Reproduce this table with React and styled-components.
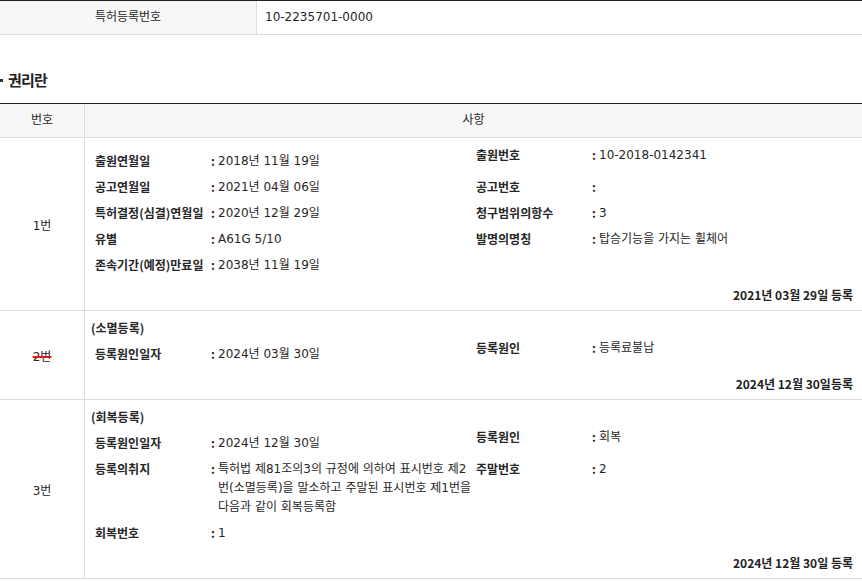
import React from "react";
import styled, { createGlobalStyle, css } from "styled-components";

const textFont = `"DejaVu Sans", "Noto Sans CJK KR", sans-serif`;
const boldFont = `"Noto Sans CJK KR", "Noto Sans", sans-serif`;

const GlobalStyle = createGlobalStyle`
  body {
    margin: 0;
    background: #fff;
    font-family: ${textFont};
    font-size: 12px;
    color: #262626;
  }
`;

const Page = styled.div`
  width: 862px;
`;

const InfoTable = styled.div`
  display: grid;
  grid-template-columns: 257px 1fr;
  border-top: 1px solid #222;
  border-bottom: 1px solid #ddd;
`;

const InfoLabel = styled.div`
  background: #f7f7f7;
  border-right: 1px solid #ddd;
  text-align: center;
  line-height: 33px;
`;

const InfoValue = styled.div`
  padding-left: 8px;
  line-height: 33px;
`;

const SectionTitle = styled.h3`
  display: flex;
  align-items: center;
  margin: 35px 0 13px;
  font-family: ${boldFont};
  font-size: 15px;
  line-height: 20px;
  font-weight: 700;
  letter-spacing: -0.8px;
  color: #222;

  &::before {
    content: "";
    width: 3px;
    height: 3px;
    background: #333;
    margin-right: 5px;
  }
`;

const RightsTable = styled.div`
  border-top: 1px solid #222;
`;

const Row = styled.div`
  display: grid;
  grid-template-columns: 85px 1fr;
  border-bottom: 1px solid #ddd;
  ${(p) =>
    p.$head &&
    css`
      background: #f7f7f7;
      height: 33px;
      line-height: 33px;
    `}
`;

const HeadCell = styled.div`
  text-align: center;
  border-right: ${(p) => (p.$last ? "none" : "1px solid #ddd")};
`;

const NumCell = styled.div`
  display: flex;
  align-items: center;
  justify-content: center;
  border-right: 1px solid #ddd;
  ${(p) =>
    p.$struck &&
    css`
      text-decoration: line-through;
      text-decoration-color: #e8141b;
      text-decoration-thickness: 2px;
    `}
`;

const Content = styled.div`
  padding: 7px 9px 5px 6px;
`;

const Caption = styled.div`
  font-family: ${boldFont};
  font-weight: 700;
  line-height: 20px;
`;

const Details = styled.div`
  display: grid;
  grid-template-columns: 116px 265px 116px 1fr;
  margin-top: 3px;
`;

const Label = styled.div`
  padding: 3px 4px 4px;
  line-height: 19px;
  font-family: ${boldFont};
  font-weight: 700;
  white-space: nowrap;
  ${(p) =>
    p.$top &&
    css`
      padding-top: 0;
      line-height: 13px;
    `}
`;

/* DejaVu sits ~1px higher than Noto in the same line box, so the value cell starts 1px lower */
const Value = styled.div`
  display: flex;
  padding: 4px 4px 3px;
  line-height: 19px;
  ${(p) =>
    p.$top &&
    css`
      padding-top: 1px;
      line-height: 13px;
    `}
`;

const Colon = styled.span`
  flex: none;
  width: 7px;
  margin-top: -1px;
  font-family: ${boldFont};
  font-weight: 700;
`;

const Lines = styled.span`
  display: flex;
  flex-direction: column;
  white-space: nowrap;
`;

const Footer = styled.div`
  margin-top: 7px;
  text-align: right;
  font-family: ${boldFont};
  font-weight: 700;
  line-height: 20px;
  color: #222;
`;

const entries = [
  {
    no: "1번",
    left: [
      ["출원연월일", "2018년 11월 19일"],
      ["공고연월일", "2021년 04월 06일"],
      ["특허결정(심결)연월일", "2020년 12월 29일"],
      ["유별", "A61G 5/10"],
      ["존속기간(예정)만료일", "2038년 11월 19일"],
    ],
    right: [
      ["출원번호", "10-2018-0142341"],
      ["공고번호", ""],
      ["청구범위의항수", "3"],
      ["발명의명칭", "탑승기능을 가지는 휠체어"],
    ],
    footer: "2021년 03월 29일 등록",
  },
  {
    no: "2번",
    struck: true,
    caption: "(소멸등록)",
    left: [["등록원인일자", "2024년 03월 30일"]],
    right: [["등록원인", "등록료불납"]],
    footer: "2024년 12월 30일등록",
  },
  {
    no: "3번",
    caption: "(회복등록)",
    left: [
      ["등록원인일자", "2024년 12월 30일"],
      [
        "등록의취지",
        [
          "특허법 제81조의3의 규정에 의하여 표시번호 제2",
          "번(소멸등록)을 말소하고 주말된 표시번호 제1번을",
          "다음과 같이 회복등록함",
        ],
      ],
      ["회복번호", "1"],
    ],
    right: [
      ["등록원인", "회복"],
      ["주말번호", "2"],
    ],
    footer: "2024년 12월 30일 등록",
  },
];

function Pair({ item, top }) {
  if (!item) {
    return (
      <>
        <Label />
        <Value />
      </>
    );
  }
  const [label, value] = item;
  return (
    <>
      <Label $top={top}>{label}</Label>
      <Value $top={top}>
        <Colon>:</Colon>
        {Array.isArray(value) ? (
          <Lines>
            {value.map((line) => (
              <span key={line}>{line}</span>
            ))}
          </Lines>
        ) : (
          <span>{value}</span>
        )}
      </Value>
    </>
  );
}

function Entry({ entry }) {
  const count = Math.max(entry.left.length, entry.right.length);
  const rows = Array.from({ length: count }, (_, i) => i);

  return (
    <Row>
      <NumCell $struck={entry.struck}>{entry.no}</NumCell>
      <Content>
        {entry.caption && <Caption>{entry.caption}</Caption>}
        <Details>
          {rows.map((i) => (
            <React.Fragment key={i}>
              <Pair item={entry.left[i]} />
              <Pair item={entry.right[i]} top={i === 0} />
            </React.Fragment>
          ))}
        </Details>
        <Footer>{entry.footer}</Footer>
      </Content>
    </Row>
  );
}

export default function App() {
  return (
    <Page>
      <GlobalStyle />
      <InfoTable>
        <InfoLabel>특허등록번호</InfoLabel>
        <InfoValue>10-2235701-0000</InfoValue>
      </InfoTable>

      <SectionTitle>권리란</SectionTitle>

      <RightsTable>
        <Row $head>
          <HeadCell>번호</HeadCell>
          <HeadCell $last>사항</HeadCell>
        </Row>
        {entries.map((entry) => (
          <Entry key={entry.no} entry={entry} />
        ))}
      </RightsTable>
    </Page>
  );
}
